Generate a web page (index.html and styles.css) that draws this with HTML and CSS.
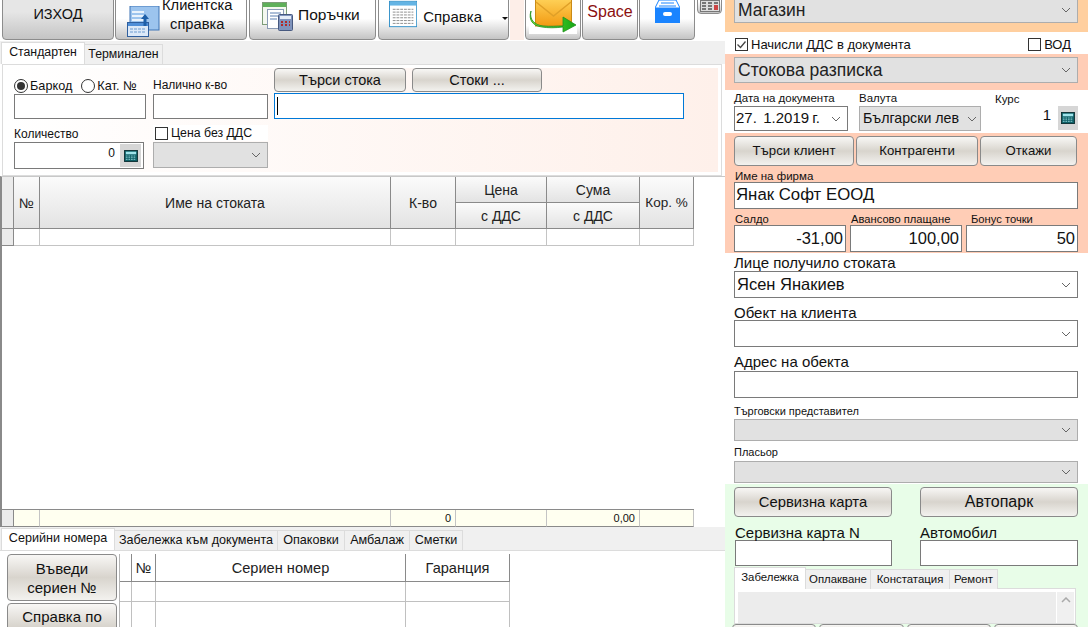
FILE: index.html
```html
<!DOCTYPE html>
<html lang="bg">
<head>
  <meta charset="UTF-8">
  <title>Стокова разписка</title>
  <link rel="stylesheet" href="styles.css">
</head>
<body>
<svg class="defs" width="0" height="0">
  <defs>
    <linearGradient id="env" x1="0" y1="0" x2="0" y2="1">
      <stop offset="0" stop-color="#ffd35a"/>
      <stop offset="1" stop-color="#f29a12"/>
    </linearGradient>
    <linearGradient id="swoosh" x1="0" y1="0" x2="1" y2="0">
      <stop offset="0" stop-color="#7fe83a"/>
      <stop offset="1" stop-color="#14a814"/>
    </linearGradient>
  </defs>
  <symbol id="calc" viewBox="0 0 16 14">
    <rect x="0.5" y="0.5" width="15" height="13" fill="#0d5f66" stroke="#06282c"/>
    <rect x="2" y="2" width="12" height="3" fill="#9fe3ea"/>
    <path d="M2 7h12M2 9h12M2 11h12" stroke="#8fd0d6" stroke-dasharray="2 1"/>
  </symbol>
  <symbol id="chev" viewBox="0 0 10 6">
    <path d="M1 1l4 4 4-4" fill="none" stroke="#666" stroke-width="1"/>
  </symbol>
</svg>
<div class="page">
  <div class="left">
    <div class="toolbar">
      <button class="tool exit"><span>ИЗХОД</span></button>
      <button class="tool client">
        <svg class="ico" width="33" height="32" viewBox="0 0 33 32">
          <rect x="3" y="0" width="29" height="24" fill="#9cc4ee" stroke="#3f75b5"/>
          <path d="M5 6h12M5 10h12M5 14h12M5 18h12" stroke="#e8f2fc" stroke-width="2"/>
          <rect x="0.5" y="16.5" width="21" height="14" fill="#dce9f8" stroke="#2f5f9e"/>
          <rect x="1" y="17" width="20" height="3" fill="#4f8fd8"/>
          <path d="M3 23h16M3 26h16" stroke="#6d9bd0" stroke-dasharray="3 1"/>
          <path d="M18 8l-4 5h2.500v7h3v-7h2.500z" fill="#1e5fa8"/>
        </svg>
        <span class="two">Клиентска<br>справка</span>
      </button>
      <button class="tool orders">
        <svg class="ico" width="31" height="29" viewBox="0 0 31 29">
          <rect x="0.500" y="0.500" width="24" height="22" fill="#f4f8f0" stroke="#7d9c78"/>
          <rect x="1" y="1" width="23" height="4" fill="#5fb05a"/>
          <rect x="5.500" y="7.500" width="16" height="19" fill="#fff" stroke="#8a9ab5"/>
          <path d="M8 11h11M8 14h11M8 17h7" stroke="#5b7fb0"/>
          <rect x="16.500" y="12.500" width="14" height="16" rx="1" fill="#7f93bc" stroke="#47597f"/>
          <rect x="18" y="14" width="11" height="3" fill="#e6edf8"/>
          <path d="M19 20h2M23 20h2M27 20h1M19 23h2M23 23h2M27 23h1" stroke="#b02a2a" stroke-width="2"/>
        </svg>
        <span class="lift">Поръчки</span>
      </button>
      <button class="tool report">
        <svg class="ico" width="30" height="28" viewBox="0 0 30 28">
          <rect x="0.500" y="0.500" width="29" height="27" fill="#fff" stroke="#2f8fc8"/>
          <rect x="1" y="1" width="28" height="4" fill="#64b4e4"/>
          <path d="M4 9h22M4 12h22M4 15h22M4 18h22M4 21h22M4 24h22" stroke="#8a8a8a" stroke-dasharray="3 1"/>
        </svg>
        <span class="lift-sm">Справка</span>
        <i class="caret"></i>
      </button>
      <div class="tool-gap"></div>
      <button class="tool mail">
        <svg width="48" height="35" viewBox="0 0 48 35">
          <rect width="48" height="35" fill="#fff"/>
          <rect x="6.500" y="-1" width="36" height="28" fill="url(#env)" stroke="#c98a17"/>
          <path d="M7 3l17.500 14L42 3" fill="none" stroke="#e0a028" stroke-width="1.500"/>
          <path d="M2 12c-2 9 4 14 12 15 7 1 14 0 20 0v-9l13 8-13 7v-5c-8 1-15 1-21 0C4 27-1 21 2 12z" fill="url(#swoosh)" stroke="#1f8f1f" stroke-width="0.800"/>
        </svg>
      </button>
      <button class="tool space"><span>Space</span></button>
      <button class="tool box">
        <svg width="25" height="23" viewBox="0 0 25 23">
          <path d="M4 0h17l4 8H0z" fill="#fff" stroke="#1a84ff"/>
          <path d="M6 3h13M4 6h17" stroke="#1a84ff"/>
          <rect x="0" y="8" width="25" height="15" fill="#1a84ff"/>
          <rect x="8" y="12" width="9" height="4" rx="2" fill="#fff"/>
        </svg>
      </button>
      <button class="tool mini">
        <svg width="20" height="12" viewBox="0 0 20 12">
          <rect x="0.500" y="0.500" width="19" height="11" fill="#ddd" stroke="#777"/>
          <path d="M2 3h4M8 3h4M14 3h4M2 6h4M8 6h4M2 9h4M8 9h4" stroke="#777" stroke-width="2"/>
          <rect x="14" y="5" width="4" height="5" fill="#c44"/>
        </svg>
      </button>
    </div>

    <div class="tabs top-tabs">
      <div class="tab active w-std">Стандартен</div>
      <div class="tab w-term">Терминален</div>
    </div>
    <div class="panel">
      <div class="panel-in">
        <div class="col col-a">
          <div class="radios">
            <label class="radio"><i class="dot on"></i>Баркод</label>
            <label class="radio"><i class="dot"></i>Кат. №</label>
          </div>
          <div class="field"></div>
          <div class="lbl lbl-qty">Количество</div>
          <div class="qty">
            <span class="qty-val">0</span>
            <span class="calc-btn"><svg width="14" height="12"><use href="#calc"/></svg></span>
          </div>
        </div>
        <div class="col col-b">
          <div class="lbl lbl-avail">Налично к-во</div>
          <div class="field"></div>
          <label class="check price-check"><i class="box-mark"></i>Цена без ДДС</label>
          <div class="sel sel-empty"><svg class="chev" width="10" height="6"><use href="#chev"/></svg></div>
        </div>
        <div class="col col-c">
          <div class="search-btns">
            <button class="btn b-find">Търси стока</button>
            <button class="btn b-goods">Стоки ...</button>
          </div>
          <div class="field focus"><i class="cursor"></i></div>
        </div>
      </div>
    </div>

    <div class="grid">
      <table class="items">
        <colgroup>
          <col class="c-ind"><col class="c-no"><col class="c-name"><col class="c-qty"><col class="c-price"><col class="c-sum"><col class="c-disc">
        </colgroup>
        <tr>
          <th class="ind" rowspan="2"></th>
          <th rowspan="2">№</th>
          <th rowspan="2">Име на стоката</th>
          <th rowspan="2">К-во</th>
          <th class="half">Цена</th>
          <th class="half">Сума</th>
          <th class="disc" rowspan="2">Кор. %</th>
        </tr>
        <tr>
          <th class="half">с ДДС</th>
          <th class="half">с ДДС</th>
        </tr>
        <tr class="row">
          <td class="ind"></td><td></td><td></td><td></td><td></td><td></td><td></td>
        </tr>
      </table>
      <table class="items foot">
        <colgroup>
          <col class="c-ind"><col class="c-no"><col class="c-name"><col class="c-qty"><col class="c-price"><col class="c-sum"><col class="c-disc">
        </colgroup>
        <tr class="row">
          <td class="ind"></td><td></td><td></td><td class="num">0</td><td></td><td class="num">0,00</td><td></td>
        </tr>
      </table>
    </div>

    <div class="tabs low-tabs">
      <div class="tab active w-serial">Серийни номера</div>
      <div class="tab w-note">Забележка към документа</div>
      <div class="tab w-pack">Опаковки</div>
      <div class="tab w-amb">Амбалаж</div>
      <div class="tab w-acc">Сметки</div>
    </div>
    <div class="serial">
      <div class="serial-btns">
        <button class="btn b-serial">Въведи<br>сериен №</button>
        <button class="btn b-serial b-lookup">Справка по</button>
      </div>
      <table class="serials">
        <colgroup>
          <col class="s-ind"><col class="s-no"><col class="s-name"><col class="s-war">
        </colgroup>
        <tr><th></th><th>№</th><th>Сериен номер</th><th>Гаранция</th></tr>
        <tr class="s-row"><td></td><td></td><td></td><td></td></tr>
        <tr class="s-row s-last"><td></td><td></td><td></td><td></td></tr>
      </table>
    </div>
  </div>

  <div class="right">
    <section class="band peach b1">
      <div class="sel big">Магазин<svg class="chev" width="10" height="6"><use href="#chev"/></svg></div>
    </section>
    <section class="band vat">
      <label class="check"><i class="box-mark checked"><svg width="13" height="13" viewBox="0 0 13 13"><path d="M2.500 6.500l3 3 5-6" fill="none" stroke="#444" stroke-width="1.300"/></svg></i>Начисли ДДС в документа</label>
      <label class="check"><i class="box-mark"></i>ВОД</label>
    </section>
    <section class="band salmon b3">
      <div class="sel big">Стокова разписка<svg class="chev" width="10" height="6"><use href="#chev"/></svg></div>
    </section>
    <section class="band b4">
      <div class="f-date">
        <div class="tiny">Дата на документа</div>
        <div class="field ctl">27.&nbsp; 1.2019 г.<svg class="chev" width="10" height="6"><use href="#chev"/></svg></div>
      </div>
      <div class="f-cur">
        <div class="tiny">Валута</div>
        <div class="sel ctl">Български лев<svg class="chev" width="10" height="6"><use href="#chev"/></svg></div>
      </div>
      <div class="f-rate">
        <div class="tiny rate-lbl">Курс</div>
        <div class="rate-row">
          <span class="rate-val">1</span>
          <span class="calc-btn wide"><svg width="14" height="12"><use href="#calc"/></svg></span>
        </div>
      </div>
    </section>
    <section class="band salmon b5">
      <div class="client-btns">
        <button class="btn cb1">Търси клиент</button>
        <button class="btn cb2">Контрагенти</button>
        <button class="btn cb3">Откажи</button>
      </div>
      <div class="tiny firm-lbl">Име на фирма</div>
      <div class="field firm">Янак Софт ЕООД</div>
      <div class="sums">
        <div class="sum-cell"><div class="tiny">Салдо</div><div class="field amount">-31,00</div></div>
        <div class="sum-cell"><div class="tiny">Авансово плащане</div><div class="field amount">100,00</div></div>
        <div class="sum-cell bonus"><div class="tiny">Бонус точки</div><div class="field amount">50</div></div>
      </div>
    </section>
    <section class="band b6">
      <div class="cap">Лице получило стоката</div>
      <div class="field wide-f">Ясен Янакиев<svg class="chev" width="10" height="6"><use href="#chev"/></svg></div>
      <div class="cap gap-cap">Обект на клиента</div>
      <div class="field wide-f"><svg class="chev" width="10" height="6"><use href="#chev"/></svg></div>
      <div class="cap gap-cap2">Адрес на обекта</div>
      <div class="field wide-f"></div>
      <div class="small gap-sm">Търговски представител</div>
      <div class="sel thin"><svg class="chev" width="10" height="6"><use href="#chev"/></svg></div>
      <div class="small gap-sm2">Пласьор</div>
      <div class="sel thin"><svg class="chev" width="10" height="6"><use href="#chev"/></svg></div>
    </section>
    <section class="band green">
      <div class="svc-row">
        <button class="btn svc svc-card">Сервизна карта</button>
        <button class="btn svc">Автопарк</button>
      </div>
      <div class="svc-fields">
        <div class="svc-f"><div class="cap">Сервизна карта N</div><div class="field svc-in"></div></div>
        <div class="svc-f"><div class="cap">Автомобил</div><div class="field svc-in"></div></div>
      </div>
      <div class="tabs svc-tabs">
        <div class="tab active w-z">Забележка</div>
        <div class="tab w-o">Оплакване</div>
        <div class="tab w-k">Констатация</div>
        <div class="tab w-r">Ремонт</div>
      </div>
      <div class="note-panel">
        <div class="note-area"></div>
        <div class="note-scroll"><svg width="10" height="6" viewBox="0 0 10 6"><path d="M1 5l4-4 4 4" fill="none" stroke="#aaa" stroke-width="1.500"/></svg></div>
      </div>
      <div class="note-btns">
        <button class="btn nb"></button><button class="btn nb"></button><button class="btn nb"></button><button class="btn nb"></button>
      </div>
    </section>
  </div>
</div>
</body>
</html>
```
FILE: styles.css
```css
* {
  box-sizing: border-box;
}
html, body {
  margin: 0;
  height: 627px;
  overflow: hidden;
  background: #fff;
}
body {
  font-family: "Liberation Sans", Arial, sans-serif;
  font-size: 12px;
  color: #111;
}
.defs {
  display: block;
  height: 0;
}
.page {
  display: grid;
  grid-template-columns: 725px 363px;
  height: 627px;
  overflow: hidden;
}
.left, .right {
  height: 627px;
  overflow: hidden;
}
button {
  font-family: inherit;
  color: #111;
  padding: 0;
  margin: 0;
}

/* top toolbar */
.toolbar {
  display: flex;
  align-items: flex-end;
  height: 41px;
  overflow: hidden;
  padding: 0 0 1px 2px;
  gap: 1px;
}
.tool {
  flex: none;
  height: 70px;
  border: 1px solid #8c8c8c;
  border-radius: 4px;
  background: linear-gradient(#fff 0, #fff 70%, #c4c4c4 100%);
  display: flex;
  align-items: flex-end;
  justify-content: center;
  font-size: 15px;
  padding-bottom: 7px;
}
.exit {
  width: 112px;
  font-size: 14.500px;
  padding-bottom: 17px;
  background: linear-gradient(#e6e6e6 60%, #c4c4c4 100%);
}
.client {
  width: 132px;
  padding: 0 0 1px 11px;
  justify-content: flex-start;
  gap: 2px;
}
.two {
  text-align: center;
  font-size: 14.700px;
  line-height: 19px;
  padding-bottom: 4px;
}
.orders {
  width: 127px;
  margin-left: 1px;
  padding: 0 0 8px 12px;
  justify-content: flex-start;
  gap: 5px;
}
.lift {
  margin-bottom: 7px;
  font-size: 15.500px;
}
.lift-sm {
  margin-bottom: 3px;
}
.report {
  width: 131px;
  margin-left: 1px;
  padding: 0 0 11px 10px;
  justify-content: flex-start;
  gap: 6px;
}
.caret {
  border: 3px solid transparent;
  border-top: 3px solid #111;
  border-bottom: 0;
  margin: 0 0 8px 14px;
}
.tool-gap {
  flex: none;
  width: 14px;
  height: 40px;
  background: #fdeee8;
}
.mail {
  width: 56px;
  background: linear-gradient(#fff 80%, #c4c4c4 100%);
  padding-bottom: 5px;
}
.space {
  width: 56px;
  color: #8b1010;
  font-size: 16px;
  padding-bottom: 18px;
}
.box {
  width: 56px;
  padding-bottom: 16px;
}
.mini {
  width: 25px;
  height: 40px;
  margin: 0 0 26px 1px;
  padding-bottom: 1px;
}

/* tabs */
.tabs {
  display: flex;
  align-items: flex-end;
}
.tab {
  height: 20px;
  background: #f0f0f0;
  border: 1px solid #dcdcdc;
  border-bottom: 0;
  border-left: 0;
  text-align: center;
  line-height: 19px;
  font-size: 12.300px;
}
.tab.active {
  height: 22px;
  background: #fff;
  border-left: 1px solid #dcdcdc;
  line-height: 19px;
}
.top-tabs {
  height: 23px;
  background: #f0f0f0;
  padding-left: 1px;
}
.w-std { width: 84px; }
.w-term { width: 78px; }

/* goods panel */
.panel {
  margin-left: 2px;
  width: 720px;
  height: 112px;
  border: 1px solid #dcdcdc;
  padding: 3px;
  background: #fff;
}
.panel-in {
  height: 104px;
  display: flex;
  background: linear-gradient(90deg, #fff 0, #fef0ea 100%);
  padding-left: 8px;
}
.col {
  flex: none;
}
.col-a {
  width: 132px;
  padding-top: 10px;
}
.col-b {
  width: 115px;
  margin-left: 7px;
  padding-top: 9px;
}
.col-c {
  width: 410px;
  margin-left: 6px;
}
.radios {
  display: flex;
  gap: 9px;
  height: 16px;
}
.radio, .check {
  display: flex;
  align-items: center;
  gap: 2px;
}
.radio {
  font-size: 12.700px;
}
.dot {
  width: 14px;
  height: 14px;
  border: 1px solid #333;
  border-radius: 50%;
  background: #fff;
  display: flex;
  align-items: center;
  justify-content: center;
}
.dot.on::after {
  content: "";
  width: 8px;
  height: 8px;
  border-radius: 50%;
  background: #333;
}
.field {
  height: 25px;
  background: #fff;
  border: 1px solid #7a7a7a;
}
.lbl {
  height: 17px;
  line-height: 16px;
}
.lbl-qty {
  margin-top: 6px;
  line-height: 18px;
}
.qty {
  width: 130px;
  height: 27px;
  background: #fff;
  border: 1px solid #7a7a7a;
  display: flex;
  align-items: center;
  justify-content: flex-end;
  padding-right: 2px;
  gap: 5px;
}
.qty-val {
  font-size: 12px;
  margin-bottom: 6px;
}
.calc-btn {
  width: 21px;
  height: 23px;
  background: #d6d6d6;
  display: flex;
  align-items: center;
  justify-content: center;
}
.check {
  gap: 3px;
  font-size: 13px;
}
.box-mark {
  width: 13px;
  height: 13px;
  background: #fff;
  border: 1px solid #333;
  display: block;
  flex: none;
}
.box-mark svg {
  display: block;
  margin: -1px;
}
.price-check {
  background: #fff;
  height: 16px;
  margin-top: 6px;
  margin-bottom: 1px;
  padding-left: 2px;
  font-size: 12.300px;
}
.sel {
  position: relative;
  background: #e1e1e1;
  border: 1px solid #adadad;
}
.chev {
  position: absolute;
  right: 6px;
  top: 50%;
  margin-top: -3px;
}
.sel-empty {
  height: 26px;
}
.search-btns {
  display: flex;
  gap: 6px;
  height: 24px;
  margin-bottom: 1px;
}
.btn {
  border: 1px solid #8a8a8a;
  border-radius: 4px;
  background: linear-gradient(#f8f7f5 0, #d8d4cd 50%, #f3f2ef 100%);
  font-size: 15px;
  line-height: 18px;
}
.search-btns .btn {
  font-size: 14.500px;
}
.b-find { width: 132px; }
.b-goods { width: 130px; }
.field.focus {
  border-color: #0078d7;
  height: 26px;
  padding: 3px 2px;
}
.cursor {
  display: block;
  width: 1px;
  height: 18px;
  background: #000;
}

/* items grid */
.grid {
  height: 351px;
  border-left: 2px solid #8a8a8a;
  border-top: 1px solid #c8c8c8;
  display: flex;
  flex-direction: column;
  justify-content: space-between;
}
.items {
  border-collapse: separate;
  border-spacing: 0;
  table-layout: fixed;
  width: 692px;
}
.c-ind { width: 12px; }
.c-no { width: 26px; }
.c-name { width: 351px; }
.c-qty { width: 65px; }
.c-price { width: 91px; }
.c-sum { width: 93px; }
.c-disc { width: 54px; }
.items th {
  font-weight: normal;
  font-size: 14px;
  color: #222;
  border-right: 1px solid #8a8a8a;
  border-bottom: 1px solid #8a8a8a;
  background: linear-gradient(#fbfbfb, #e3e3e3);
  padding: 0;
  height: 52px;
}
.items th.half {
  height: 26px;
}
.items th.ind {
  background: #ebebeb;
}
.items th.disc {
  font-size: 13.500px;
}
.items td {
  height: 17px;
  padding: 0 4px 0 0;
  border-right: 1px solid #c4c4c4;
  border-bottom: 1px solid #c4c4c4;
  font-size: 11px;
  text-align: right;
}
.items td.ind {
  background: #ebebeb;
  border-right-color: #8a8a8a;
  border-bottom-color: #8a8a8a;
}
.foot {
  border-top: 1px solid #8a8a8a;
}
.foot td {
  background: #fffff0;
  border-bottom: 1px solid #8a8a8a;
}

/* lower tabs */
.low-tabs {
  height: 23px;
  padding-left: 1px;
  background: #f0f0f0;
}
.low-tabs .tab {
  font-size: 12.600px;
}
.w-serial { width: 114px; }
.w-note { width: 163px; }
.w-pack { width: 67px; }
.w-amb { width: 65px; }
.w-acc { width: 53px; }
.serial {
  display: flex;
  padding: 3px 0 0 7px;
  border-top: 1px solid #dcdcdc;
}
.serial-btns {
  width: 110px;
  margin-right: 2px;
  display: flex;
  flex-direction: column;
  gap: 2px;
}
.b-serial {
  height: 47px;
  font-size: 15px;
  line-height: 19px;
}
.b-lookup {
  padding-bottom: 20px;
}
.serials {
  border-collapse: separate;
  border-spacing: 0;
  table-layout: fixed;
  width: 391px;
  align-self: flex-start;
  border-left: 1px solid #b4b4b4;
}
.s-ind { width: 12px; }
.s-no { width: 24px; }
.s-name { width: 250px; }
.s-war { width: 104px; }
.serials th {
  font-weight: normal;
  font-size: 14.600px;
  height: 28px;
  padding: 0;
  color: #222;
  border-right: 1px solid #8a8a8a;
  border-bottom: 1px solid #8a8a8a;
}
.serials td {
  height: 20px;
  border-right: 1px solid #c0c0c0;
  border-bottom: 1px solid #c0c0c0;
}
.serials .s-last td {
  height: 30px;
}

/* right column */
.band {
  width: 363px;
  padding: 0 10px 0 9px;
}
.peach {
  background: #ffcf9f;
}
.salmon {
  background: #ffcdb6;
}
.b1 {
  height: 32px;
  display: flow-root;
}
.big {
  height: 26px;
  font-size: 17.500px;
  line-height: 24px;
  padding-left: 3px;
  color: #222;
}
.b1 .big {
  margin-top: -3px;
}
.vat {
  height: 22px;
  display: flex;
  justify-content: space-between;
  align-items: center;
  padding: 2px 17px 0 10px;
}
.b3 {
  height: 36px;
  padding-top: 3px;
}
.b4 {
  height: 43px;
  display: flex;
}
.tiny {
  font-size: 11.500px;
  line-height: 12px;
}
.f-date {
  width: 114px;
  padding-top: 2px;
}
.f-cur {
  width: 122px;
  margin-left: 11px;
  padding-top: 2px;
}
.ctl {
  height: 25px;
  margin-top: 2px;
  line-height: 22px;
  padding-left: 1px;
  position: relative;
  white-space: nowrap;
}
.f-date .field {
  font-size: 15px;
  word-spacing: -1px;
}
.f-cur .sel {
  font-size: 14.200px;
  padding-left: 3px;
}
.f-cur .chev {
  right: 3px;
}
.f-rate {
  flex: 1;
  padding-top: 3px;
  padding-left: 14px;
}
.rate-row {
  display: flex;
  justify-content: flex-end;
  gap: 7px;
  margin-top: 1px;
}
.rate-val {
  font-size: 15px;
}
.calc-btn.wide {
  width: 20px;
  height: 24px;
}
.b5 {
  height: 120px;
  padding-top: 3px;
}
.client-btns {
  display: flex;
  gap: 2px;
  height: 30px;
}
.cb1 { width: 120px; }
.cb2 { width: 122px; }
.cb3 { width: 97px; }
.client-btns .btn {
  font-size: 13.200px;
}
.firm-lbl {
  margin-top: 4px;
  padding-left: 1px;
}
.firm {
  height: 27px;
  font-size: 16.800px;
  line-height: 24px;
  padding-left: 1px;
}
.sums {
  display: flex;
  gap: 4px;
  margin-top: 4px;
}
.sum-cell {
  width: 112px;
}
.sum-cell .tiny {
  padding-left: 1px;
  height: 12px;
  font-size: 11.200px;
  white-space: nowrap;
}
.bonus .tiny {
  padding-left: 5px;
}
.amount {
  height: 27px;
  font-size: 16.500px;
  line-height: 24px;
  text-align: right;
  padding-right: 2px;
}
.b6 {
  height: 231px;
  padding-top: 2px;
}
.cap {
  font-size: 15px;
  line-height: 16px;
}
.wide-f {
  position: relative;
  height: 27px;
  font-size: 16.500px;
  line-height: 24px;
  padding-left: 2px;
}
.gap-cap {
  margin-top: 7px;
  margin-bottom: -1px;
}
.gap-cap2 {
  margin-top: 7px;
  margin-bottom: 1px;
}
.small {
  font-size: 11px;
  line-height: 12px;
}
.gap-sm {
  margin-top: 7px;
  margin-bottom: 2px;
}
.gap-sm2 {
  margin-top: 5px;
  margin-bottom: 3px;
}
.thin {
  height: 22px;
}
.green {
  height: 143px;
  background: #e8fde8;
  padding-top: 3px;
}
.svc-row {
  display: flex;
  justify-content: space-between;
}
.svc {
  width: 158px;
  height: 30px;
  font-size: 16px;
}
.svc-card {
  font-size: 14.800px;
}
.svc-fields {
  display: flex;
  justify-content: space-between;
  margin-top: 8px;
}
.svc-f {
  width: 158px;
}
.svc-f:first-child {
  width: 157px;
  margin-left: 1px;
}
.svc-f .cap {
  line-height: 15px;
}
.svc-in {
  height: 26px;
}
.svc-tabs {
  margin-top: 1px;
  height: 22px;
}
.svc-tabs .tab {
  font-size: 11.400px;
}
.w-z { width: 72px; }
.w-o { width: 65px; }
.w-k { width: 79px; }
.w-r { width: 48px; }
.note-panel {
  display: flex;
  width: 342px;
  height: 36px;
  background: #fff;
  border: 1px solid #dcdcdc;
  padding: 3px 1px 0 3px;
  margin-top: -1px;
}
.note-area {
  flex: 1;
  background: #ececec;
}
.note-scroll {
  width: 17px;
  margin-left: 1px;
  background: #f0f0f0;
  padding-top: 5px;
}
.note-scroll svg {
  display: block;
  margin: 0 auto;
}
.note-btns {
  display: flex;
  gap: 3px;
  margin-left: -2px;
}
.nb {
  width: 85px;
  height: 20px;
}
```
